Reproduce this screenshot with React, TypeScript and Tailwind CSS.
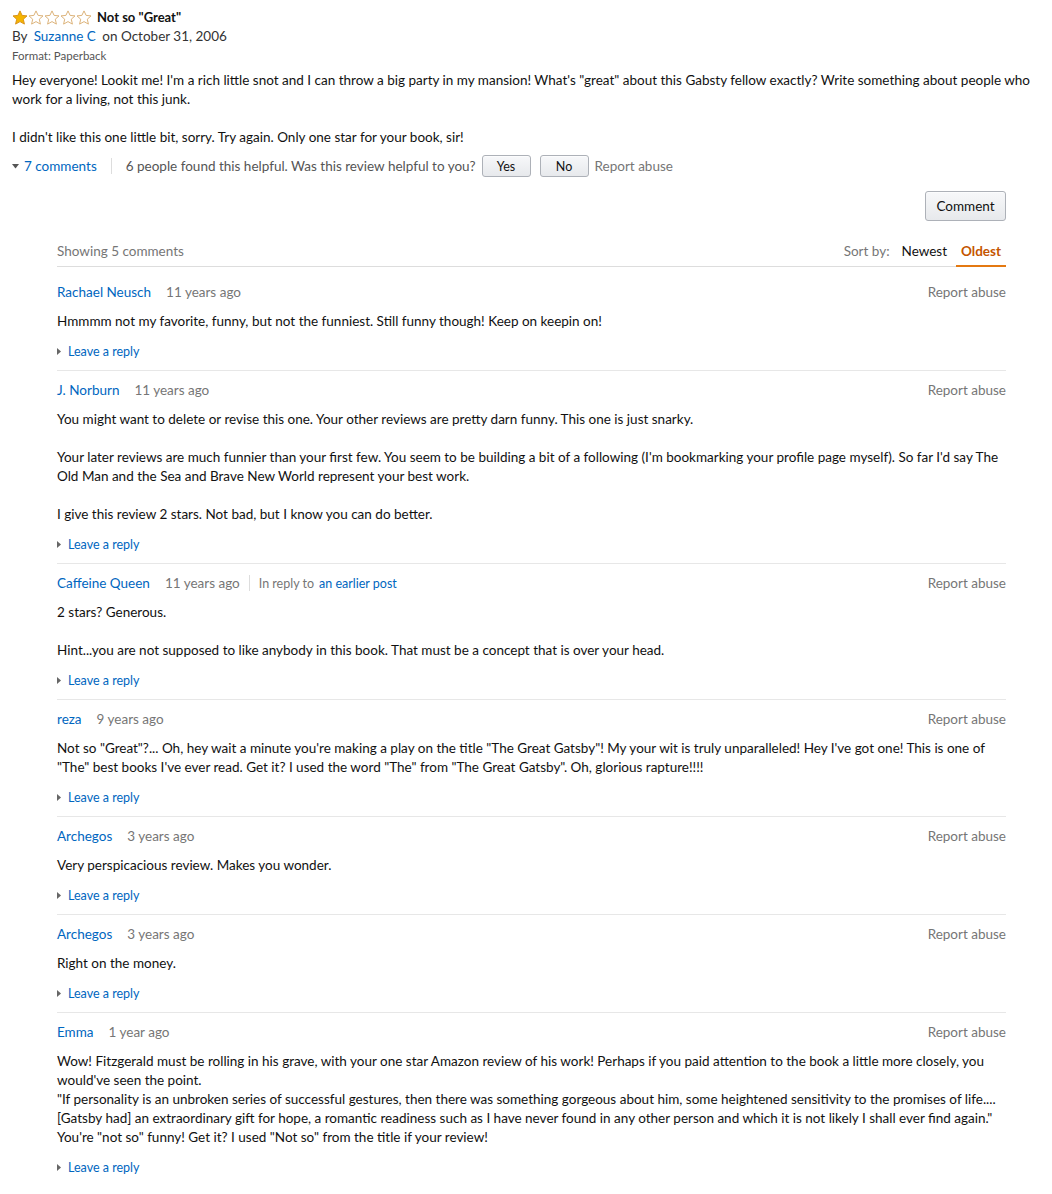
import React from 'react';

type Comment = {
  name: string;
  ago: string;
  replyTo?: boolean;
  text: string;
};

const comments: Comment[] = [
  {
    name: 'Rachael Neusch',
    ago: '11 years ago',
    text: 'Hmmmm not my favorite, funny, but not the funniest. Still funny though! Keep on keepin on!',
  },
  {
    name: 'J. Norburn',
    ago: '11 years ago',
    text:
      "You might want to delete or revise this one. Your other reviews are pretty darn funny. This one is just snarky.\n\nYour later reviews are much funnier than your first few. You seem to be building a bit of a following (I'm bookmarking your profile page myself). So far I'd say The Old Man and the Sea and Brave New World represent your best work.\n\nI give this review 2 stars. Not bad, but I know you can do better.",
  },
  {
    name: 'Caffeine Queen',
    ago: '11 years ago',
    replyTo: true,
    text:
      '2 stars? Generous.\n\nHint...you are not supposed to like anybody in this book. That must be a concept that is over your head.',
  },
  {
    name: 'reza',
    ago: '9 years ago',
    text:
      'Not so "Great"?... Oh, hey wait a minute you\'re making a play on the title "The Great Gatsby"! My your wit is truly unparalleled! Hey I\'ve got one! This is one of "The" best books I\'ve ever read. Get it? I used the word "The" from "The Great Gatsby". Oh, glorious rapture!!!!',
  },
  {
    name: 'Archegos',
    ago: '3 years ago',
    text: 'Very perspicacious review. Makes you wonder.',
  },
  {
    name: 'Archegos',
    ago: '3 years ago',
    text: 'Right on the money.',
  },
  {
    name: 'Emma',
    ago: '1 year ago',
    text:
      'Wow! Fitzgerald must be rolling in his grave, with your one star Amazon review of his work! Perhaps if you paid attention to the book a little more closely, you would\'ve seen the point.\n"If personality is an unbroken series of successful gestures, then there was something gorgeous about him, some heightened sensitivity to the promises of life.... [Gatsby had] an extraordinary gift for hope, a romantic readiness such as I have never found in any other person and which it is not likely I shall ever find again." You\'re "not so" funny! Get it? I used "Not so" from the title if your review!',
  },
];

function Star({ filled }: { filled: boolean }) {
  return (
    <svg width="16" height="15" viewBox="0 0 16 15">
      <path
        d="M8 0.9 L10.1 5.4 L15 5.9 L11.3 9.2 L12.4 14.1 L8 11.6 L3.6 14.1 L4.7 9.2 L1 5.9 L5.9 5.4 Z"
        fill={filled ? '#f4b400' : '#ffffff'}
        stroke={filled ? '#d9921a' : '#dcb37a'}
        strokeWidth="1"
        strokeLinejoin="round"
      />
    </svg>
  );
}

function Caret({ down }: { down?: boolean }) {
  return down ? (
    <svg width="7" height="5" viewBox="0 0 7 5" className="inline-block">
      <path d="M0 0 L7 0 L3.5 4.5 Z" fill="#555" />
    </svg>
  ) : (
    <svg width="4" height="7" viewBox="0 0 4 7" className="inline-block">
      <path d="M0 0 L4 3.5 L0 7 Z" fill="#666" />
    </svg>
  );
}

const btn =
  'border border-[#adb1b8] rounded-[3px] bg-gradient-to-b from-[#f7f8fa] to-[#e7e9ec] text-[#111] shadow-[0_1px_0_rgba(255,255,255,0.6)_inset]';

export default function App() {
  return (
    <div
      className="w-[1052px] min-h-[1194px] bg-white text-[#111] text-[13.5px] leading-[19px] px-[12px] pt-[8px]"
      style={{ fontFamily: 'Lato, "Liberation Sans", Arial, sans-serif' }}
    >
      <div className="flex items-center h-[18px]">
        <div className="flex">
          {[0, 1, 2, 3, 4].map((i) => (
            <Star key={i} filled={i === 0} />
          ))}
        </div>
        <span className="ml-[5px] font-bold text-[13px]">Not so "Great"</span>
      </div>
      <div className="mt-[1px] leading-[18px] text-[#333]">
        By <a className="text-[#0066c0] ml-[3px] mr-[3px]">Suzanne C</a> on October 31, 2006
      </div>
      <div className="mt-[3px] text-[11.5px] leading-[16px] text-[#555]">Format: Paperback</div>
      <div className="mt-[7px] whitespace-pre-line">
        {"Hey everyone! Lookit me! I'm a rich little snot and I can throw a big party in my mansion! What's \"great\" about this Gabsty fellow exactly? Write something about people who work for a living, not this junk.\n\nI didn't like this one little bit, sorry. Try again. Only one star for your book, sir!"}
      </div>

      <div className="mt-[8px] flex items-center h-[22px]">
        <Caret down />
        <a className="ml-[5px] text-[#0066c0]">7 comments</a>
        <span className="mx-[14px] w-px h-[16px] bg-[#ddd]" />
        <span className="text-[#555]">6 people found this helpful. Was this review helpful to you?</span>
        <button className={`${btn} ml-[6px] w-[49px] h-[22px] text-[12.5px]`}>Yes</button>
        <button className={`${btn} ml-[9px] w-[49px] h-[22px] text-[12.5px]`}>No</button>
        <a className="ml-[6px] text-[#767676]">Report abuse</a>
      </div>

      <div className="w-[994px] flex justify-end mt-[14px]">
        <button className={`${btn} w-[81px] h-[30px] text-[13.5px]`}>Comment</button>
      </div>

      <div className="ml-[45px] w-[949px]">
        <div className="mt-[20px] flex justify-between items-start border-b border-[#dddddd] h-[26px]">
          <span className="text-[#767676] leading-[20px]">Showing 5 comments</span>
          <div className="flex items-start leading-[20px]">
            <span className="text-[#767676]">Sort by:</span>
            <span className="ml-[11px] px-[1px]">Newest</span>
            <span className="ml-[8px] px-[5px] pb-[4px] border-b-[2px] border-[#e47911] text-[#c45500] font-bold">
              Oldest
            </span>
          </div>
        </div>

        <div className="mt-[6px]">
          {comments.map((c, i) => (
            <div
              key={i}
              className={`pt-[9px] pb-[9px] ${i < comments.length - 1 ? 'border-b border-[#e7e7e7]' : ''}`}
            >
              <div className="flex items-center h-[20px]">
                <a className="text-[#0066c0]">{c.name}</a>
                <span className="ml-[15px] text-[#767676]">{c.ago}</span>
                {c.replyTo && (
                  <>
                    <span className="ml-[9px] w-px h-[16px] bg-[#ddd]" />
                    <span className="ml-[9px] text-[12.5px] text-[#767676]">In reply to</span>
                    <a className="ml-[5px] text-[12.5px] text-[#0066c0]">an earlier post</a>
                  </>
                )}
                <a className="ml-auto text-[#767676]">Report abuse</a>
              </div>
              <div className="mt-[10px] whitespace-pre-line">{c.text}</div>
              <div className="mt-[11px] flex items-center text-[12.5px] leading-[19px]">
                <Caret />
                <a className="ml-[7px] text-[#0066c0]">Leave a reply</a>
              </div>
            </div>
          ))}
        </div>
      </div>
    </div>
  );
}
